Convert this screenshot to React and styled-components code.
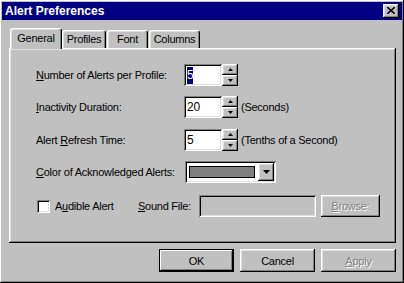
import styled, { createGlobalStyle } from 'styled-components';

// Win95 bevels
const raised = `
  box-shadow: inset -1px -1px #000, inset 1px 1px #fff, inset -2px -2px #808080, inset 2px 2px #dfdfdf;
`;
const sunken = `
  box-shadow: inset 1px 1px #808080, inset -1px -1px #fff, inset 2px 2px #000, inset -2px -2px #dfdfdf;
`;

const Global = createGlobalStyle`
  html, body {
    margin: 0;
    padding: 0;
    background: #c0c0c0;
  }
  * {
    box-sizing: border-box;
  }
`;

const Window = styled.div`
  width: 404px;
  height: 283px;
  padding: 2px;
  background: #c0c0c0;
  font-family: "Liberation Sans", Arial, sans-serif;
  font-size: 11px;
  letter-spacing: -0.25px;
  color: #000;
  display: flex;
  flex-direction: column;
  box-shadow: inset -1px -1px #000, inset 1px 1px #fff, inset -2px -2px #808080;
`;

const TitleBar = styled.div`
  height: 18px;
  background: #000080;
  color: #fff;
  display: flex;
  align-items: center;
  justify-content: space-between;
  padding: 0 3px 0 3px;
`;

const Title = styled.span`
  font-weight: bold;
  font-size: 12px;
  letter-spacing: 0;
`;

const CloseButton = styled.div`
  width: 16px;
  height: 14px;
  background: #c0c0c0;
  ${raised}
  display: flex;
  align-items: center;
  justify-content: center;
  padding-bottom: 1px;
`;

const Body = styled.div`
  flex: 1;
  padding: 8px 6px 0 7px;
  display: flex;
  flex-direction: column;
`;

const TabStrip = styled.div`
  display: flex;
  align-items: flex-end;
  height: 20px;
  padding-left: 1px;
  position: relative;
  z-index: 1;
`;

const Tab = styled.div`
  width: ${(p) => p.$w}px;
  height: ${(p) => (p.$active ? 21 : 18)}px;
  margin-bottom: ${(p) => (p.$active ? -1 : 0)}px;
  margin-right: ${(p) => p.$gap || 0}px;
  background: #c0c0c0;
  border-radius: 3px 3px 0 0;
  border-top: 1px solid #fff;
  border-left: 1px solid #fff;
  border-right: 1px solid #000;
  box-shadow: inset -1px 0 #808080, inset 1px 1px #dfdfdf;
  display: flex;
  align-items: center;
  justify-content: center;
  padding-bottom: ${(p) => (p.$active ? 3 : 1)}px;
`;

const Panel = styled.div`
  height: 195px;
  background: #c0c0c0;
  ${raised}
  box-shadow: inset -1px -1px #000, inset 1px 1px #fff, inset -2px -2px #808080, inset 2px 2px #dfdfdf;
  padding: 16px 0 0 27px;
  display: flex;
  flex-direction: column;
  gap: 10px;
`;

const Row = styled.div`
  display: flex;
  align-items: center;
  height: 22px;
  margin-top: ${(p) => p.$mt || 0}px;
`;

const Label = styled.span`
  width: ${(p) => p.$w || 148}px;
  flex-shrink: 0;
`;

const U = styled.span`
  text-decoration: underline;
  text-underline-offset: 1px;
`;

const Field = styled.div`
  width: ${(p) => p.$w || 38}px;
  height: 22px;
  background: ${(p) => (p.$disabled ? '#c0c0c0' : '#fff')};
  ${sunken}
  display: flex;
  align-items: center;
  padding-left: 3px;
  font-size: 12px;
`;

const Selected = styled.span`
  background: #000080;
  color: #fff;
  padding: 1px 0;
  line-height: 15px;
`;

const Spinner = styled.div`
  width: 16px;
  height: 22px;
  display: flex;
  flex-direction: column;
`;

const SpinButton = styled.div`
  flex: 1;
  background: #c0c0c0;
  ${raised}
  display: flex;
  align-items: center;
  justify-content: center;
`;

const Unit = styled.span`
  margin-left: 3px;
`;

const Combo = styled.div`
  width: 91px;
  height: 22px;
  margin-left: 1px;
  background: #fff;
  ${sunken}
  display: flex;
  align-items: center;
  padding: 2px;
`;

const Swatch = styled.div`
  flex: 1;
  height: 12px;
  margin: 0 3px 0 2px;
  background: #808080;
  border: 1px solid #000;
`;

const DropButton = styled.div`
  width: 16px;
  height: 18px;
  background: #c0c0c0;
  ${raised}
  display: flex;
  align-items: center;
  justify-content: center;
`;

const Check = styled.div`
  width: 13px;
  height: 13px;
  margin-left: 1px;
  background: #fff;
  ${sunken}
`;

const CheckLabel = styled.span`
  margin-left: 5px;
  width: 83px;
`;

const SoundLabel = styled.span`
  width: 61px;
`;

const Button = styled.div`
  width: ${(p) => p.$w || 75}px;
  height: ${(p) => p.$h || 23}px;
  margin-left: ${(p) => p.$ml || 0}px;
  background: #c0c0c0;
  display: flex;
  align-items: center;
  justify-content: center;
  ${(p) =>
    p.$default
      ? 'box-shadow: inset 1px 1px #000, inset -1px -1px #000, inset -2px -2px #000, inset 2px 2px #fff, inset -3px -3px #808080;'
      : raised}
  color: ${(p) => (p.$disabled ? '#808080' : '#000')};
  text-shadow: ${(p) => (p.$disabled ? '1px 1px #fff' : 'none')};
`;

const ButtonRow = styled.div`
  display: flex;
  justify-content: flex-end;
  gap: 6px;
  margin-top: 6px;
`;

const Arrow = ({ up }) => (
  <svg width="5" height="3" viewBox="0 0 5 3">
    <path d={up ? 'M2.5 0 L5 3 L0 3 Z' : 'M0 0 L5 0 L2.5 3 Z'} fill="#000" />
  </svg>
);

function Spin() {
  return (
    <Spinner>
      <SpinButton>
        <Arrow up />
      </SpinButton>
      <SpinButton>
        <Arrow />
      </SpinButton>
    </Spinner>
  );
}

export default function App() {
  return (
    <>
      <Global />
      <Window>
        <TitleBar>
          <Title>Alert Preferences</Title>
          <CloseButton>
            <svg width="8" height="7" viewBox="0 0 8 7">
              <path d="M0 0 L8 7 M8 0 L0 7" stroke="#000" strokeWidth="1.6" />
            </svg>
          </CloseButton>
        </TitleBar>
        <Body>
          <TabStrip>
            <Tab $active $w={52}>General</Tab>
            <Tab $w={44} $gap={1}>Profiles</Tab>
            <Tab $w={41} $gap={1}>Font</Tab>
            <Tab $w={51}>Columns</Tab>
          </TabStrip>
          <Panel>
            <Row>
              <Label>
                <U>N</U>umber of Alerts per Profile:
              </Label>
              <Field>
                <Selected>5</Selected>
              </Field>
              <Spin />
            </Row>
            <Row>
              <Label>
                <U>I</U>nactivity Duration:
              </Label>
              <Field>20</Field>
              <Spin />
              <Unit>(Seconds)</Unit>
            </Row>
            <Row $mt={1}>
              <Label>
                Alert <U>R</U>efresh Time:
              </Label>
              <Field>5</Field>
              <Spin />
              <Unit>(Tenths of a Second)</Unit>
            </Row>
            <Row>
              <Label>
                <U>C</U>olor of Acknowledged Alerts:
              </Label>
              <Combo>
                <Swatch />
                <DropButton>
                  <svg width="7" height="4" viewBox="0 0 7 4">
                    <path d="M0 0 L7 0 L3.5 4 Z" fill="#000" />
                  </svg>
                </DropButton>
              </Combo>
            </Row>
            <Row $mt={2}>
              <Check />
              <CheckLabel>
                A<U>u</U>dible Alert
              </CheckLabel>
              <SoundLabel>
                <U>S</U>ound File:
              </SoundLabel>
              <Field $w={117} $disabled />
              <Button $w={59} $h={22} $ml={5} $disabled>
                <span>
                  <U>B</U>rowse:
                </span>
              </Button>
            </Row>
          </Panel>
          <ButtonRow>
            <Button $default>OK</Button>
            <Button>Cancel</Button>
            <Button $disabled>
              <span>
                <U>A</U>pply
              </span>
            </Button>
          </ButtonRow>
        </Body>
      </Window>
    </>
  );
}
